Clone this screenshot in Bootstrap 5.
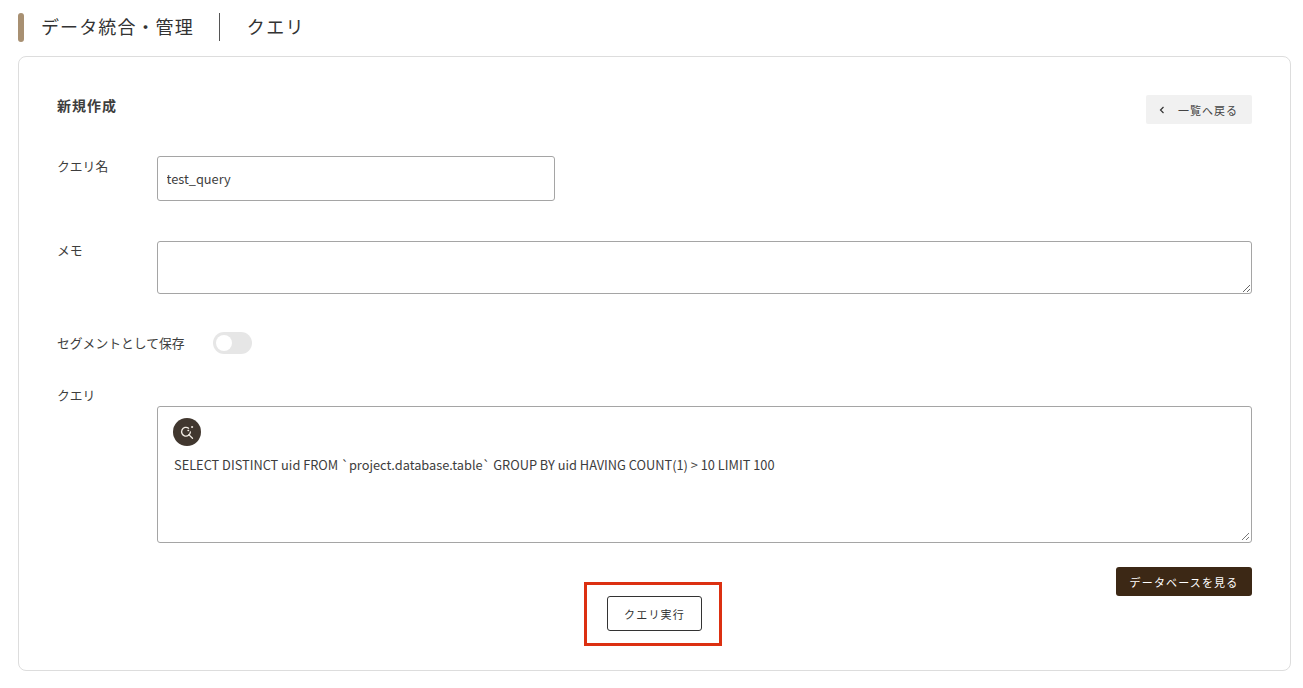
<!DOCTYPE html>
<html lang="ja">
<head>
<meta charset="utf-8">
<link href="https://cdn.jsdelivr.net/npm/bootstrap@5.3.0/dist/css/bootstrap.min.css" rel="stylesheet">
<style>
html,body{height:100%;}
body{font-family:"Noto Sans CJK JP","Noto Sans",sans-serif;color:#3d3d3d;background:#fff;font-size:13px;overflow:hidden;}
.page-head{height:56px;padding:13px 0 0 18px;}
.head-bar{width:6px;height:29px;background:#a89072;border-radius:3px;}
.head-title{font-size:18px;line-height:27px;letter-spacing:1.1px;margin-left:17px;color:#333;}
.head-title-sub{margin-left:0;letter-spacing:1.4px;}
.head-sep{width:1px;height:28px;background:#555;margin:0 27px 0 25px;}
.main-panel{margin:0 12px 0 18px;height:615px;border:1px solid #ddd;border-radius:8px;padding:37px 38px 0 38px;}
.panel-title{font-size:14px;font-weight:700;line-height:22px;letter-spacing:1px;color:#3d3d3d;}
.back-btn{width:106px;height:29px;margin-top:1px;background:#f1f1f1;font-size:11px;letter-spacing:1px;border-radius:2px;color:#444;padding:2px 0 0 13px;}
.back-btn svg{margin:-2px 13px 0 0;}
.row-name{margin-top:32px;}
.row-memo{margin-top:40px;}
.row-memo .field-label{margin-top:-1px;}
.row-seg{margin-top:38px;}
.row-query{margin-top:31px;}
.field-label{width:100px;flex:none;line-height:20px;font-size:12.8px;}
.field-input{height:45px;width:398px;border:1px solid #a5a5a5;border-radius:3px;padding:0 8.5px;font-size:12.8px;color:#3d3d3d;}
.field-area{height:53px;width:100%;display:block;border:1px solid #a5a5a5;border-radius:3px;}
.label-seg{width:156px;flex:none;font-size:12.8px;}
.switch-off{width:39px;height:22px;border-radius:11px;background:#e6e6e6;padding:3px;}
.switch-knob{width:16px;height:16px;border-radius:50%;background:#fff;}
.query-wrap{margin-top:21px;}
.query-box{height:137px;width:100%;border:1px solid #a5a5a5;border-radius:3px;padding:11px 16px;position:relative;}
.ai-icon{width:28px;height:28px;border-radius:50%;background:#41372f;margin:0 0 9px -1px;}
.query-text{font-size:12.8px;line-height:20px;color:#3d3d3d;}
.grip{position:absolute;right:1px;bottom:1px;}
.db-row{margin-top:24px;}
.db-btn{width:136px;height:29px;background:#3c2815;color:#fff;font-size:11px;letter-spacing:1.15px;border-radius:3px;border:0;padding:1px 0 0;}
.red-frame{width:138px;height:64px;border:3px solid #dc3011;margin:-14px 0 0 -3px;padding:11px 0 0 20px;}
.run-btn{width:95px;height:35px;border:1px solid #333;border-radius:3px;background:#fff;font-size:11px;letter-spacing:1.2px;color:#333;padding:1px 0 0;}
</style>
</head>
<body>
<div class="page-head d-flex align-items-start">
  <div class="head-bar"></div>
  <div class="head-title">データ統合・管理</div>
  <div class="head-sep"></div>
  <div class="head-title head-title-sub">クエリ</div>
</div>
<div class="main-panel">
  <div class="d-flex justify-content-between align-items-start">
    <div class="panel-title">新規作成</div>
    <div class="back-btn d-flex align-items-center">
      <svg width="6" height="8" viewBox="0 0 6 8" fill="none" stroke="#333" stroke-width="1.2"><path d="M4.5 1 1.5 4l3 3"/></svg>
      <span>一覧へ戻る</span>
    </div>
  </div>
  <div class="d-flex row-name">
    <div class="field-label">クエリ名</div>
    <input class="field-input" type="text" value="test_query">
  </div>
  <div class="d-flex row-memo">
    <div class="field-label">メモ</div>
    <textarea class="field-area flex-grow-1"></textarea>
  </div>
  <div class="d-flex align-items-center row-seg">
    <div class="label-seg">セグメントとして保存</div>
    <div class="switch-off"><div class="switch-knob"></div></div>
  </div>
  <div class="d-flex row-query">
    <div class="field-label">クエリ</div>
    <div class="flex-grow-1 query-wrap">
      <div class="query-box">
        <div class="ai-icon d-flex align-items-center justify-content-center">
          <svg width="18" height="18" viewBox="0 0 18 18" fill="none" stroke="#f2ece4" stroke-width="1.3" stroke-linecap="round"><path d="M10.6 5.2A4.4 4.4 0 1 0 12.4 9"/><path d="M10.8 11.6 14.5 15.2"/><circle cx="14" cy="4" r=".6" fill="#f2ece4" stroke-width=".8"/><path d="M10 7.5h.6"/></svg>
        </div>
        <div class="query-text">SELECT DISTINCT uid FROM `project.database.table` GROUP BY uid HAVING COUNT(1) &gt; 10 LIMIT 100</div>
        <svg class="grip" width="9" height="9" viewBox="0 0 9 9" stroke="#777" stroke-width="1"><path d="M8 1 1 8M8 5 5 8"/></svg>
      </div>
      <div class="d-flex justify-content-end db-row">
        <button class="db-btn" type="button">データベースを見る</button>
      </div>
    </div>
  </div>
  <div class="d-flex justify-content-center">
    <div class="red-frame">
      <button class="run-btn d-block" type="button">クエリ実行</button>
    </div>
  </div>
</div>
<script src="https://cdn.jsdelivr.net/npm/bootstrap@5.3.0/dist/js/bootstrap.bundle.min.js"></script>
</body>
</html>
